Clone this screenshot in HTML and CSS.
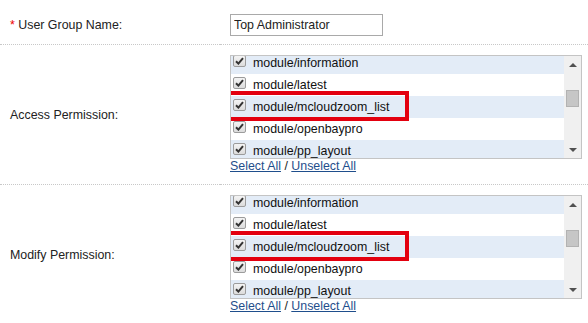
FILE: index.html
```html
<!DOCTYPE html>
<html lang="en">
<head>
    <meta charset="UTF-8">
    <title>User Group</title>
    <link rel="stylesheet" href="styles.css">
</head>
<body>

    <table class="form">
        <tr class="first">
            <td class="label"><span class="required">*</span> User Group Name:</td>
            <td class="field"><input type="text" class="name-input" value="Top Administrator"></td>
        </tr>
        <tr>
            <td class="label">Access Permission:</td>
            <td class="field">
                <div class="checklist">
                    <div class="checklist-items">
                        <div class="checklist-inner">
                            <div class="item odd"><span class="check"><svg width="9" height="8" viewBox="0 0 9 8"><path d="M1 4.2 L3.4 6.6 L8 1.2" fill="none" stroke="#333" stroke-width="2"/></svg></span>module/information</div>
                            <div class="item"><span class="check"><svg width="9" height="8" viewBox="0 0 9 8"><path d="M1 4.2 L3.4 6.6 L8 1.2" fill="none" stroke="#333" stroke-width="2"/></svg></span>module/latest</div>
                            <div class="item odd marked"><span class="check"><svg width="9" height="8" viewBox="0 0 9 8"><path d="M1 4.2 L3.4 6.6 L8 1.2" fill="none" stroke="#333" stroke-width="2"/></svg></span>module/mcloudzoom_list<span class="highlight"></span></div>
                            <div class="item"><span class="check"><svg width="9" height="8" viewBox="0 0 9 8"><path d="M1 4.2 L3.4 6.6 L8 1.2" fill="none" stroke="#333" stroke-width="2"/></svg></span>module/openbaypro</div>
                            <div class="item odd"><span class="check"><svg width="9" height="8" viewBox="0 0 9 8"><path d="M1 4.2 L3.4 6.6 L8 1.2" fill="none" stroke="#333" stroke-width="2"/></svg></span>module/pp_layout</div>
                        </div>
                    </div>
                    <div class="scrollbar">
                        <div class="scroll-btn"><span class="arrow-up"></span></div>
                        <div class="scroll-track"><div class="scroll-thumb"></div></div>
                        <div class="scroll-btn"><span class="arrow-down"></span></div>
                    </div>
                </div>
                <div class="select-links"><a href="#">Select All</a> / <a href="#">Unselect All</a></div>
            </td>
        </tr>
        <tr>
            <td class="label">Modify Permission:</td>
            <td class="field">
                <div class="checklist">
                    <div class="checklist-items">
                        <div class="checklist-inner">
                            <div class="item odd"><span class="check"><svg width="9" height="8" viewBox="0 0 9 8"><path d="M1 4.2 L3.4 6.6 L8 1.2" fill="none" stroke="#333" stroke-width="2"/></svg></span>module/information</div>
                            <div class="item"><span class="check"><svg width="9" height="8" viewBox="0 0 9 8"><path d="M1 4.2 L3.4 6.6 L8 1.2" fill="none" stroke="#333" stroke-width="2"/></svg></span>module/latest</div>
                            <div class="item odd marked"><span class="check"><svg width="9" height="8" viewBox="0 0 9 8"><path d="M1 4.2 L3.4 6.6 L8 1.2" fill="none" stroke="#333" stroke-width="2"/></svg></span>module/mcloudzoom_list<span class="highlight"></span></div>
                            <div class="item"><span class="check"><svg width="9" height="8" viewBox="0 0 9 8"><path d="M1 4.2 L3.4 6.6 L8 1.2" fill="none" stroke="#333" stroke-width="2"/></svg></span>module/openbaypro</div>
                            <div class="item odd"><span class="check"><svg width="9" height="8" viewBox="0 0 9 8"><path d="M1 4.2 L3.4 6.6 L8 1.2" fill="none" stroke="#333" stroke-width="2"/></svg></span>module/pp_layout</div>
                        </div>
                    </div>
                    <div class="scrollbar">
                        <div class="scroll-btn"><span class="arrow-up"></span></div>
                        <div class="scroll-track"><div class="scroll-thumb"></div></div>
                        <div class="scroll-btn"><span class="arrow-down"></span></div>
                    </div>
                </div>
                <div class="select-links"><a href="#">Select All</a> / <a href="#">Unselect All</a></div>
            </td>
        </tr>
    </table>

</body>
</html>
```

FILE: styles.css
```css
* {
    box-sizing: border-box;
    margin: 0;
    padding: 0;
}

body {
    font-family: "Liberation Sans", Arial, sans-serif;
    font-size: 12.4px;
    color: #222;
    background: #fff;
}

.form {
    width: 100%;
    border-collapse: collapse;
    table-layout: fixed;
}

.form td {
    padding: 10px;
    border-bottom: 1px dotted #c8c8c8;
    vertical-align: middle;
}

.form td.field {
    padding-right: 0;
}

.form .first td {
    padding-top: 14px;
    padding-bottom: 8px;
}

.form td.label {
    width: 220px;
}

.required {
    color: #e00;
}

.name-input {
    display: block;
    width: 153px;
    height: 22px;
    border: 1px solid #a9a9a9;
    padding: 0 3px;
    font-family: inherit;
    font-size: 12.4px;
    color: #222;
}

.checklist {
    display: flex;
    width: 352px;
    height: 104px;
    border: 1px solid #c4c4c4;
    background: #fff;
}

.checklist-items {
    flex: 1;
    overflow: hidden;
}

.checklist-inner {
    margin-top: -4px;
}

.item {
    position: relative;
    display: flex;
    align-items: center;
    height: 22px;
    padding-left: 2px;
    color: #111;
}

.item.odd {
    background: #e3ecf7;
}

.check {
    display: flex;
    align-items: center;
    justify-content: center;
    width: 13px;
    height: 12px;
    margin: -4px 7px 0 0;
    border: 1px solid #9c9c9c;
    border-radius: 2px;
    background: linear-gradient(#f4f4f4, #dcdcdc);
}

.highlight {
    position: absolute;
    left: -6px;
    top: -5px;
    width: 184px;
    height: 30px;
    border: 4px solid #e3000f;
}

.scrollbar {
    width: 17px;
    display: flex;
    flex-direction: column;
    background: #f0f0f0;
}

.scroll-btn {
    height: 17px;
    display: flex;
    align-items: center;
    justify-content: center;
}

.arrow-up {
    border-left: 4px solid transparent;
    border-right: 4px solid transparent;
    border-bottom: 4px solid #505050;
}

.arrow-down {
    border-left: 4px solid transparent;
    border-right: 4px solid transparent;
    border-top: 4px solid #505050;
}

.scroll-track {
    flex: 1;
    padding: 17px 2px 0;
}

.scroll-thumb {
    height: 17px;
    background: #c6c6c6;
    border: 1px solid #b2b2b2;
}

.select-links {
    line-height: 15px;
}

.select-links a {
    color: #1f4e8c;
}
```
